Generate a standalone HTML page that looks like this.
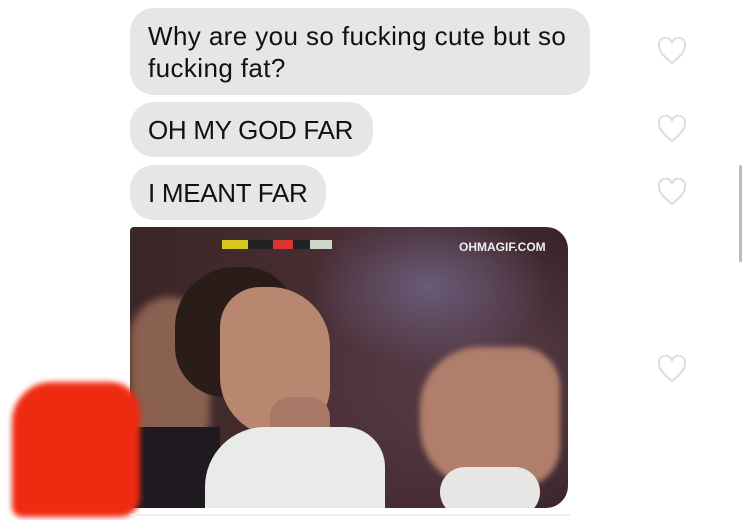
<!DOCTYPE html>
<html><head><style>
body{margin:0;width:750px;height:520px;background:#fff;position:relative;overflow:hidden;font-family:"Liberation Sans",sans-serif;}
.b{position:absolute;left:130px;background:#e6e6e6;border-radius:24px;color:#111;font-size:26px;line-height:32px;padding:0 18px;box-sizing:border-box;letter-spacing:-0.3px}
.h{position:absolute;left:657px;width:30px;height:28px}
.img{position:absolute;left:130px;top:227px;width:438px;height:281px;border-radius:4px 22px 22px 4px;overflow:hidden;background:radial-gradient(ellipse 120px 80px at 300px 60px,#6a5a78,transparent),radial-gradient(ellipse 200px 150px at 350px 150px,#5a3f4c,transparent),linear-gradient(90deg,#3a2626,#4a2e34 50%,#3a2428);}
</style></head><body>
<div class="b" style="top:8px;width:460px;height:87px;padding-top:12px;letter-spacing:0.4px">Why are you so fucking cute but so fucking fat?</div>
<div class="b" style="top:102px;width:243px;height:55px;padding-top:12px">OH MY GOD FAR</div>
<div class="b" style="top:165px;width:196px;height:55px;padding-top:12px">I MEANT FAR</div>
<div class="img">
 <div style="position:absolute;left:0;top:70px;width:80px;height:160px;background:#8a6050;border-radius:40px;filter:blur(4px)"></div>
 <div style="position:absolute;left:0;top:200px;width:90px;height:90px;background:#1e1a20"></div>
 <div style="position:absolute;left:45px;top:40px;width:120px;height:130px;background:#2a1c18;border-radius:60px 50px 30px 50px"></div>
 <div style="position:absolute;left:90px;top:60px;width:110px;height:150px;background:#b98670;border-radius:40px 60px 50px 60px"></div>
 <div style="position:absolute;left:140px;top:170px;width:60px;height:60px;background:#a87866;border-radius:20px"></div>
 <div style="position:absolute;left:75px;top:200px;width:180px;height:100px;background:#e9ebe8;border-radius:60px 40px 0 0"></div>
 <div style="position:absolute;left:290px;top:120px;width:140px;height:140px;background:#b07e6a;border-radius:60px 40px 40px 60px;filter:blur(3px)"></div>
 <div style="position:absolute;left:310px;top:240px;width:100px;height:50px;background:#e8e6e4;border-radius:30px"></div>
 <div style="position:absolute;left:92px;top:13px;width:110px;height:9px;background:#222"></div>
 <div style="position:absolute;left:92px;top:13px;width:26px;height:9px;background:#d8c820"></div>
 <div style="position:absolute;left:143px;top:13px;width:20px;height:9px;background:#d33"></div>
 <div style="position:absolute;left:180px;top:13px;width:22px;height:9px;background:#cfd8c8"></div>
 <div style="position:absolute;left:329px;top:13px;color:#eee;font-weight:bold;font-size:12px">OHMAGIF.COM</div>
</div>
<div style="position:absolute;left:12px;top:382px;width:128px;height:135px;background:#f02a10;border-radius:40px 30px 20px 10px;filter:blur(3px)"></div>
<svg class="h" style="top:37px" viewBox="0 0 30 28"><path d="M15 26 C4 17 2 13 2 8.5 A6.5 6.5 0 0 1 15 6 A6.5 6.5 0 0 1 28 8.5 C28 13 26 17 15 26Z" fill="none" stroke="#ddd" stroke-width="2"/></svg>
<svg class="h" style="top:115px" viewBox="0 0 30 28"><path d="M15 26 C4 17 2 13 2 8.5 A6.5 6.5 0 0 1 15 6 A6.5 6.5 0 0 1 28 8.5 C28 13 26 17 15 26Z" fill="none" stroke="#ddd" stroke-width="2"/></svg>
<svg class="h" style="top:178px" viewBox="0 0 30 28"><path d="M15 26 C4 17 2 13 2 8.5 A6.5 6.5 0 0 1 15 6 A6.5 6.5 0 0 1 28 8.5 C28 13 26 17 15 26Z" fill="none" stroke="#ddd" stroke-width="2"/></svg>
<svg class="h" style="top:355px" viewBox="0 0 30 28"><path d="M15 26 C4 17 2 13 2 8.5 A6.5 6.5 0 0 1 15 6 A6.5 6.5 0 0 1 28 8.5 C28 13 26 17 15 26Z" fill="none" stroke="#ddd" stroke-width="2"/></svg>
<div style="position:absolute;left:739px;top:165px;width:3px;height:97px;background:#bbb;border-radius:2px"></div>
<div style="position:absolute;left:130px;top:514px;width:440px;height:2px;background:#eee"></div>
</body></html>
